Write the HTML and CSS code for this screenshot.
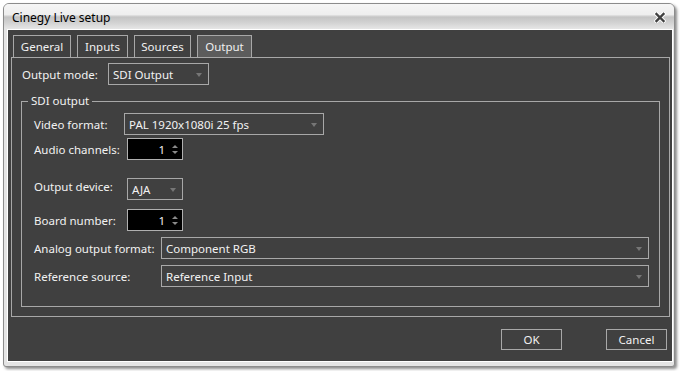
FILE: index.html
```html
<!DOCTYPE html>
<html>
<head>
<meta charset="utf-8">
<title>Cinegy Live setup</title>
<link rel="stylesheet" href="styles.css">
</head>
<body>
<div class="window">
  <div class="titlebar">
    <span class="title">Cinegy Live setup</span>
    <svg class="close" width="12" height="11" viewBox="0 0 12 11">
      <path d="M2.5 2 L9.5 9 M9.5 2 L2.5 9" stroke="#ffffff" stroke-width="4.4" stroke-linecap="square" opacity="0.85"/>
      <path d="M2.5 2 L9.5 9 M9.5 2 L2.5 9" stroke="#404040" stroke-width="2.4" stroke-linecap="square"/>
    </svg>
  </div>
  <div class="client">
    <div class="tabs">
      <div class="tab t-general">General</div>
      <div class="tab t-inputs">Inputs</div>
      <div class="tab t-sources">Sources</div>
      <div class="tab t-output active">Output</div>
    </div>
    <div class="panel">
      <div class="row">
        <span class="label w-mode">Output mode:</span>
        <div class="combo c-mode"><span>SDI Output</span><i class="arrow"></i></div>
      </div>
      <fieldset class="group">
        <legend>SDI output</legend>
        <div class="row r-video">
          <span class="label w-90">Video format:</span>
          <div class="combo c-video"><span>PAL 1920x1080i 25 fps</span><i class="arrow"></i></div>
        </div>
        <div class="row r-audio">
          <span class="label w-93">Audio channels:</span>
          <div class="spin"><span>1</span><div class="spin-btns"><i class="up"></i><i class="down"></i></div></div>
        </div>
        <div class="row r-device">
          <span class="label w-93 lift">Output device:</span>
          <div class="combo c-small"><span>AJA</span><i class="arrow"></i></div>
        </div>
        <div class="row r-board">
          <span class="label w-93">Board number:</span>
          <div class="spin"><span>1</span><div class="spin-btns"><i class="up"></i><i class="down"></i></div></div>
        </div>
        <div class="row r-analog">
          <span class="label w-127">Analog output format:</span>
          <div class="combo c-wide"><span>Component RGB</span><i class="arrow"></i></div>
        </div>
        <div class="row r-ref">
          <span class="label w-127">Reference source:</span>
          <div class="combo c-wide"><span>Reference Input</span><i class="arrow"></i></div>
        </div>
      </fieldset>
    </div>
    <div class="buttons">
      <button class="btn">OK</button>
      <button class="btn">Cancel</button>
    </div>
  </div>
</div>
</body>
</html>
```
FILE: styles.css
```css
html, body {
  margin: 0;
  padding: 0;
  background: #ffffff;
}
body {
  font-family: "Noto Sans", "Open Sans", sans-serif;
  font-size: 11.5px;
  width: 682px;
  height: 371px;
  overflow: hidden;
}
.window {
  box-sizing: border-box;
  margin: 3px 0 0 3px;
  width: 672px;
  height: 364px;
  border: 1px solid #8c8c8c;
  border-radius: 6px 6px 3px 3px;
  background: #e4e4e4;
  box-shadow: 2px 2px 3px rgba(0, 0, 0, 0.45);
  display: flex;
  flex-direction: column;
  overflow: hidden;
}
.titlebar {
  height: 25px;
  flex: none;
  display: flex;
  align-items: center;
  justify-content: space-between;
  padding: 0 8px 0 8px;
  background: linear-gradient(#f6f6f6 0%, #eeeeee 42%, #c4c4c4 52%, #d2d2d2 75%, #e6e6e6 100%);
}
.title {
  color: #000;
  font-size: 12px;
  margin-top: 1px;
}
.close {
  display: block;
  margin-top: 2px;
}
.client {
  flex: 1;
  margin: 0 1px 4px 3px;
  border: 1px solid #ffffff;
  background: #404040;
  color: #f2f2f2;
  display: flex;
  flex-direction: column;
}
.tabs {
  display: flex;
  gap: 6px;
  margin: 5px 0 0 5px;
  height: 22px;
}
.tab {
  box-sizing: border-box;
  height: 22px;
  border: 1px solid #a8a8a8;
  border-bottom: none;
  line-height: 21px;
  text-align: center;
  color: #f0f0f0;
}
.t-general { width: 58px; }
.t-inputs { width: 51px; }
.t-sources { width: 57px; }
.t-output { width: 55px; }
.tab.active {
  background: #5c5c5c;
}
.panel {
  box-sizing: border-box;
  height: 260px;
  margin: 0 2px 0 3px;
  border: 1px solid #a8a8a8;
  padding: 5px 0 0 10px;
  display: flex;
  flex-direction: column;
}
.row {
  display: flex;
  align-items: center;
  height: 22px;
}
.label {
  flex: none;
  white-space: nowrap;
}
.label.lift {
  margin-top: -5px;
}
.w-mode { width: 86px; }
.w-90 { width: 90px; }
.w-93 { width: 93px; }
.w-127 { width: 127px; }

.combo {
  box-sizing: border-box;
  height: 22px;
  border: 1px solid #a8a8a8;
  background: #404040;
  display: flex;
  align-items: center;
  justify-content: space-between;
  padding: 0 6px 0 4px;
  white-space: nowrap;
}
.arrow {
  width: 0;
  height: 0;
  border-left: 3px solid transparent;
  border-right: 3px solid transparent;
  border-top: 4px solid #767676;
  margin-top: 1px;
}
.c-mode { width: 101px; }
.c-video { width: 200px; }
.c-small { width: 56px; }
.c-wide { width: 488px; }

.spin {
  box-sizing: border-box;
  width: 56px;
  height: 22px;
  border: 1px solid #b0b0b0;
  background: #000000;
  display: flex;
  align-items: center;
  justify-content: flex-end;
  padding-right: 4px;
  gap: 7px;
}
.spin-btns {
  display: flex;
  flex-direction: column;
  gap: 3px;
}
.spin-btns .up,
.spin-btns .down {
  width: 0;
  height: 0;
  border-left: 3px solid transparent;
  border-right: 3px solid transparent;
}
.spin-btns .up { border-bottom: 3px solid #8a8a8a; }
.spin-btns .down { border-top: 3px solid #8a8a8a; }

.group {
  flex: 1;
  margin: 8px 9px 9px -1px;
  border: 1px solid #a8a8a8;
  padding: 4px 10px 0 12px;
  min-width: 0;
}
.group legend {
  padding: 0 3px;
  margin-left: -6px;
  line-height: 16px;
}
.r-audio { margin-top: 3px; }
.r-device { margin-top: 18px; }
.r-board { margin-top: 9px; }
.r-analog { margin-top: 6px; }
.r-ref { margin-top: 6px; }

.buttons {
  display: flex;
  justify-content: flex-end;
  gap: 44px;
  margin: 12px 5px 0 0;
}
.btn {
  box-sizing: border-box;
  width: 61px;
  height: 21px;
  border: 1px solid #a8a8a8;
  background: #404040;
  color: #f2f2f2;
  font-family: inherit;
  font-size: 11.5px;
  padding: 0;
}
```
